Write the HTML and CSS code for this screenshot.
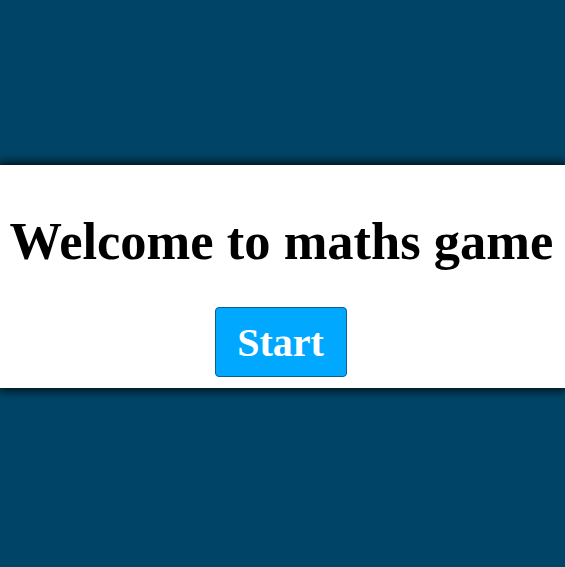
FILE: index.html
```html
<!DOCTYPE html>
<html>
<head>
<meta charset="utf-8">
<title>Maths game</title>
<link rel="stylesheet" href="styles.css">
</head>
<body>
<main class="page">
  <section class="panel">
    <h1 class="title">Welcome to maths game</h1>
    <button class="start">Start</button>
  </section>
</main>
</body>
</html>
```

FILE: styles.css
```css
html, body {
  margin: 0;
  padding: 0;
  background: #004567;
}
.page {
  height: 567px;
  padding-top: 165px;
  box-sizing: border-box;
  font-family: "Liberation Serif", "Times New Roman", serif;
}
.panel {
  background: #ffffff;
  height: 223px;
  box-shadow: 0 0 10px 2px rgba(0, 0, 0, 0.9);
  display: flex;
  flex-direction: column;
  align-items: center;
  box-sizing: border-box;
  padding-top: 44px;
  padding-right: 2px;
}
.title {
  margin: 0;
  font-size: 52.5px;
  font-weight: bold;
  line-height: 64px;
  color: #000;
  white-space: nowrap;
}
.start {
  margin-top: 34px;
  margin-right: 2px;
  width: 132px;
  height: 70px;
  background: #00a8ff;
  border: 1px solid #0b5f8f;
  border-radius: 4px;
  color: #fff;
  font-family: "Liberation Serif", "Times New Roman", serif;
  font-size: 40px;
  font-weight: bold;
  padding: 0;
}
```
